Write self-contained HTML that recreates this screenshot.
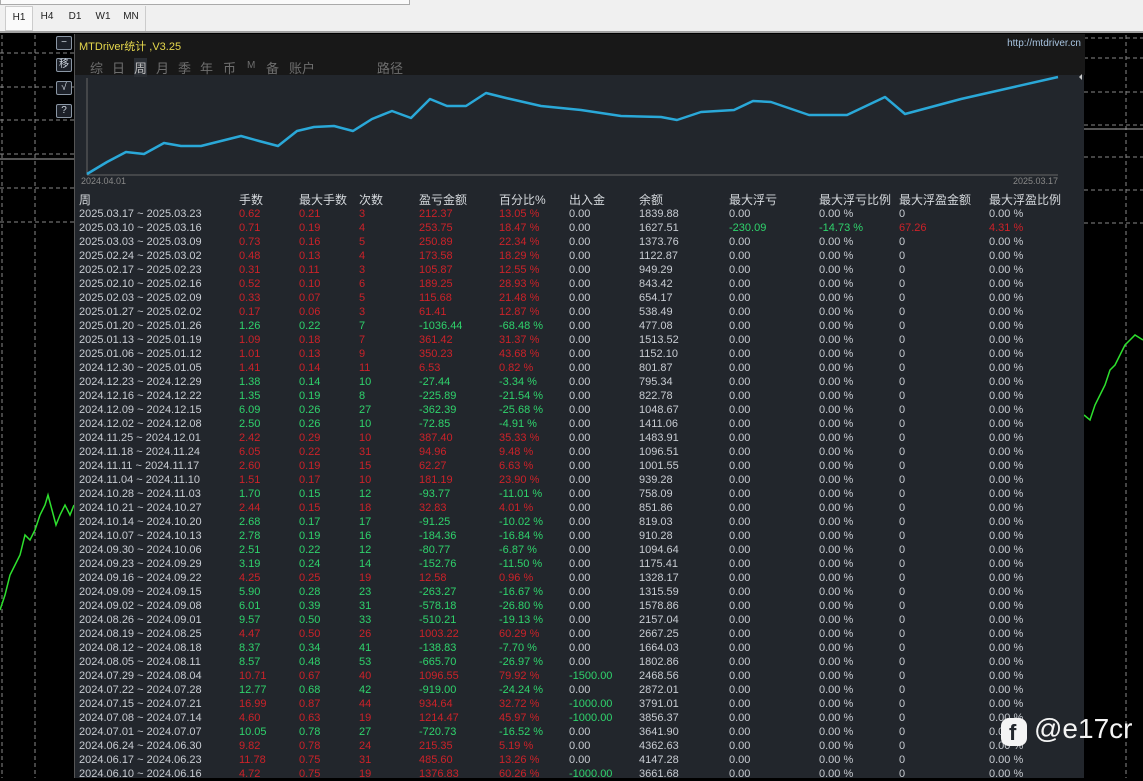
<!DOCTYPE html>
<html><head><meta charset="utf-8"><style>
*{margin:0;padding:0;box-sizing:border-box}
body{width:1143px;height:778px;overflow:hidden;background:#000;font-family:"Liberation Sans","Noto Sans CJK SC",sans-serif;position:relative}
#top{position:absolute;left:0;top:0;width:1143px;height:33px;background:#f0f0f0;border-bottom:2px solid #a0a0a0}
#top .bar{position:absolute;left:0;top:0;width:410px;height:5px;border:1px solid #aaa;border-top:none;background:#fafafa}
#top .tf{position:absolute;left:5px;top:6px;height:25px;display:flex;border-right:1px solid #ccc}
#top .tf span{font-size:10px;color:#222;width:28px;text-align:center;line-height:22px}
#top .tf span:first-child{border:1px solid #ccc;background:#fafafa}
#panel{position:absolute;left:74px;top:34px;width:1010px;height:744px;background:#22262c;border-left:1px solid #555}
#hdr{position:absolute;left:0;top:0;width:1010px;height:41px;background:#181818}
.title{position:absolute;left:4px;top:4px;font-size:11px;color:#e6d84c}
.url{position:absolute;right:4px;top:4px;font-size:10px;color:#a8c4e0}
.tabs span{position:absolute;top:24px;font-size:13px;color:#6e6e6e;white-space:nowrap}
.tabs .on{color:#bbb;background:#2a2e34}
.btn{position:absolute;left:56px;width:16px;height:14px;border:1px solid #8a96a4;border-radius:2px;background:#1c2028;color:#cfd6df;font-size:10px;text-align:center;line-height:12px}
table{position:absolute;left:79px;top:192px;border-collapse:collapse;table-layout:fixed;font-size:11px;color:#c8ccd2}
td{height:14px;line-height:14px;padding:0;white-space:nowrap;overflow:hidden}
tr.h td{font-size:12px;color:#d4d8dc;height:15px}
.R{color:#cc2229}.G{color:#2fd36c}
</style></head><body>
<div id="top"><div class="bar"></div><div class="tf"><span>H1</span><span>H4</span><span>D1</span><span>W1</span><span>MN</span></div></div>
<svg style="position:absolute;left:0;top:35px" width="1143" height="743">
<g stroke="#888" stroke-dasharray="4,3" stroke-width="1">
<line x1="2" y1="0" x2="2" y2="743"/><line x1="35" y1="0" x2="35" y2="743"/>
<line x1="0" y1="18" x2="74" y2="18"/><line x1="0" y1="52" x2="74" y2="52"/><line x1="0" y1="85" x2="74" y2="85"/><line x1="0" y1="119" x2="74" y2="119"/><line x1="0" y1="153" x2="74" y2="153"/><line x1="0" y1="187" x2="74" y2="187"/>
<line x1="1126" y1="0" x2="1126" y2="743"/>
<line x1="1084" y1="3" x2="1143" y2="3"/><line x1="1084" y1="23" x2="1143" y2="23"/><line x1="1084" y1="57" x2="1143" y2="57"/><line x1="1084" y1="90" x2="1143" y2="90"/><line x1="1084" y1="122" x2="1143" y2="122"/><line x1="1084" y1="155" x2="1143" y2="155"/><line x1="1084" y1="188" x2="1143" y2="188"/>
</g>
<line x1="0" y1="124" x2="74" y2="124" stroke="#aaa"/><line x1="1084" y1="94" x2="1143" y2="94" stroke="#aaa"/>
<polyline fill="none" stroke="#2ee02e" stroke-width="1.5" points="0,575 5,560 10,540 15,530 20,520 25,500 30,505 35,495 40,480 45,470 48,460 52,475 56,490 60,480 65,470 70,480 74,470"/>
<polyline fill="none" stroke="#2ee02e" stroke-width="1.5" points="1084,380 1090,385 1095,370 1100,360 1105,350 1110,335 1115,330 1120,320 1125,310 1130,305 1135,300 1143,305"/>
</svg>
<div class="btn" style="top:36px">−</div><div class="btn" style="top:58px">移</div><div class="btn" style="top:81px">√</div><div class="btn" style="top:104px">?</div>
<div id="panel">
<div id="hdr"><div class="title">MTDriver统计 ,V3.25</div><div class="url">http://mtdriver.cn</div>
<div class="tabs"><span style="left:15px">综</span><span style="left:37px">日</span><span class="on" style="left:59px">周</span><span style="left:81px">月</span><span style="left:103px">季</span><span style="left:125px">年</span><span style="left:148px">币</span><span style="left:172px;font-size:10px;top:26px">M</span><span style="left:191px">备</span><span style="left:214px">账户</span><span style="left:302px">路径</span></div></div>
<svg style="position:absolute;left:0;top:0" width="1010" height="160">
<line x1="12" y1="44" x2="12" y2="141" stroke="#666"/><line x1="12" y1="141" x2="983" y2="141" stroke="#666"/>
<polyline fill="none" stroke="#2aa8d8" stroke-width="2.5" stroke-linejoin="round" points="12,140 32,128 51,118 69,120 89,109 106,112 126,112 146,107 166,102 184,107 203,112 222,97 239,93 259,92 278,97 297,85 317,77 336,84 355,65 372,72 391,72 411,59 431,64 466,72 506,76 546,82 586,83 602,86 626,78 659,76 678,67 696,68 734,81 772,81 810,63 830,80 886,65 983,43"/>
<path d="M1007,40 l-3,3 3,3z" fill="#ccc"/>
<text x="6" y="150" font-size="9" fill="#888" font-family="Liberation Sans">2024.04.01</text>
<text x="938" y="150" font-size="9" fill="#888" font-family="Liberation Sans">2025.03.17</text>
</svg>
</div>
<table>
<colgroup><col style="width:160px"><col style="width:60px"><col style="width:60px"><col style="width:60px"><col style="width:80px"><col style="width:70px"><col style="width:70px"><col style="width:90px"><col style="width:90px"><col style="width:80px"><col style="width:90px"><col style="width:90px"></colgroup>
<tr class="h"><td>周</td><td>手数</td><td>最大手数</td><td>次数</td><td>盈亏金额</td><td>百分比%</td><td>出入金</td><td>余额</td><td>最大浮亏</td><td>最大浮亏比例</td><td>最大浮盈金额</td><td>最大浮盈比例</td></tr>
<tr><td>2025.03.17 ~ 2025.03.23</td><td class="R">0.62</td><td class="R">0.21</td><td class="R">3</td><td class="R">212.37</td><td class="R">13.05 %</td><td>0.00</td><td>1839.88</td><td>0.00</td><td>0.00 %</td><td>0</td><td>0.00 %</td></tr>
<tr><td>2025.03.10 ~ 2025.03.16</td><td class="R">0.71</td><td class="R">0.19</td><td class="R">4</td><td class="R">253.75</td><td class="R">18.47 %</td><td>0.00</td><td>1627.51</td><td class="G">-230.09</td><td class="G">-14.73 %</td><td class="R">67.26</td><td class="R">4.31 %</td></tr>
<tr><td>2025.03.03 ~ 2025.03.09</td><td class="R">0.73</td><td class="R">0.16</td><td class="R">5</td><td class="R">250.89</td><td class="R">22.34 %</td><td>0.00</td><td>1373.76</td><td>0.00</td><td>0.00 %</td><td>0</td><td>0.00 %</td></tr>
<tr><td>2025.02.24 ~ 2025.03.02</td><td class="R">0.48</td><td class="R">0.13</td><td class="R">4</td><td class="R">173.58</td><td class="R">18.29 %</td><td>0.00</td><td>1122.87</td><td>0.00</td><td>0.00 %</td><td>0</td><td>0.00 %</td></tr>
<tr><td>2025.02.17 ~ 2025.02.23</td><td class="R">0.31</td><td class="R">0.11</td><td class="R">3</td><td class="R">105.87</td><td class="R">12.55 %</td><td>0.00</td><td>949.29</td><td>0.00</td><td>0.00 %</td><td>0</td><td>0.00 %</td></tr>
<tr><td>2025.02.10 ~ 2025.02.16</td><td class="R">0.52</td><td class="R">0.10</td><td class="R">6</td><td class="R">189.25</td><td class="R">28.93 %</td><td>0.00</td><td>843.42</td><td>0.00</td><td>0.00 %</td><td>0</td><td>0.00 %</td></tr>
<tr><td>2025.02.03 ~ 2025.02.09</td><td class="R">0.33</td><td class="R">0.07</td><td class="R">5</td><td class="R">115.68</td><td class="R">21.48 %</td><td>0.00</td><td>654.17</td><td>0.00</td><td>0.00 %</td><td>0</td><td>0.00 %</td></tr>
<tr><td>2025.01.27 ~ 2025.02.02</td><td class="R">0.17</td><td class="R">0.06</td><td class="R">3</td><td class="R">61.41</td><td class="R">12.87 %</td><td>0.00</td><td>538.49</td><td>0.00</td><td>0.00 %</td><td>0</td><td>0.00 %</td></tr>
<tr><td>2025.01.20 ~ 2025.01.26</td><td class="G">1.26</td><td class="G">0.22</td><td class="G">7</td><td class="G">-1036.44</td><td class="G">-68.48 %</td><td>0.00</td><td>477.08</td><td>0.00</td><td>0.00 %</td><td>0</td><td>0.00 %</td></tr>
<tr><td>2025.01.13 ~ 2025.01.19</td><td class="R">1.09</td><td class="R">0.18</td><td class="R">7</td><td class="R">361.42</td><td class="R">31.37 %</td><td>0.00</td><td>1513.52</td><td>0.00</td><td>0.00 %</td><td>0</td><td>0.00 %</td></tr>
<tr><td>2025.01.06 ~ 2025.01.12</td><td class="R">1.01</td><td class="R">0.13</td><td class="R">9</td><td class="R">350.23</td><td class="R">43.68 %</td><td>0.00</td><td>1152.10</td><td>0.00</td><td>0.00 %</td><td>0</td><td>0.00 %</td></tr>
<tr><td>2024.12.30 ~ 2025.01.05</td><td class="R">1.41</td><td class="R">0.14</td><td class="R">11</td><td class="R">6.53</td><td class="R">0.82 %</td><td>0.00</td><td>801.87</td><td>0.00</td><td>0.00 %</td><td>0</td><td>0.00 %</td></tr>
<tr><td>2024.12.23 ~ 2024.12.29</td><td class="G">1.38</td><td class="G">0.14</td><td class="G">10</td><td class="G">-27.44</td><td class="G">-3.34 %</td><td>0.00</td><td>795.34</td><td>0.00</td><td>0.00 %</td><td>0</td><td>0.00 %</td></tr>
<tr><td>2024.12.16 ~ 2024.12.22</td><td class="G">1.35</td><td class="G">0.19</td><td class="G">8</td><td class="G">-225.89</td><td class="G">-21.54 %</td><td>0.00</td><td>822.78</td><td>0.00</td><td>0.00 %</td><td>0</td><td>0.00 %</td></tr>
<tr><td>2024.12.09 ~ 2024.12.15</td><td class="G">6.09</td><td class="G">0.26</td><td class="G">27</td><td class="G">-362.39</td><td class="G">-25.68 %</td><td>0.00</td><td>1048.67</td><td>0.00</td><td>0.00 %</td><td>0</td><td>0.00 %</td></tr>
<tr><td>2024.12.02 ~ 2024.12.08</td><td class="G">2.50</td><td class="G">0.26</td><td class="G">10</td><td class="G">-72.85</td><td class="G">-4.91 %</td><td>0.00</td><td>1411.06</td><td>0.00</td><td>0.00 %</td><td>0</td><td>0.00 %</td></tr>
<tr><td>2024.11.25 ~ 2024.12.01</td><td class="R">2.42</td><td class="R">0.29</td><td class="R">10</td><td class="R">387.40</td><td class="R">35.33 %</td><td>0.00</td><td>1483.91</td><td>0.00</td><td>0.00 %</td><td>0</td><td>0.00 %</td></tr>
<tr><td>2024.11.18 ~ 2024.11.24</td><td class="R">6.05</td><td class="R">0.22</td><td class="R">31</td><td class="R">94.96</td><td class="R">9.48 %</td><td>0.00</td><td>1096.51</td><td>0.00</td><td>0.00 %</td><td>0</td><td>0.00 %</td></tr>
<tr><td>2024.11.11 ~ 2024.11.17</td><td class="R">2.60</td><td class="R">0.19</td><td class="R">15</td><td class="R">62.27</td><td class="R">6.63 %</td><td>0.00</td><td>1001.55</td><td>0.00</td><td>0.00 %</td><td>0</td><td>0.00 %</td></tr>
<tr><td>2024.11.04 ~ 2024.11.10</td><td class="R">1.51</td><td class="R">0.17</td><td class="R">10</td><td class="R">181.19</td><td class="R">23.90 %</td><td>0.00</td><td>939.28</td><td>0.00</td><td>0.00 %</td><td>0</td><td>0.00 %</td></tr>
<tr><td>2024.10.28 ~ 2024.11.03</td><td class="G">1.70</td><td class="G">0.15</td><td class="G">12</td><td class="G">-93.77</td><td class="G">-11.01 %</td><td>0.00</td><td>758.09</td><td>0.00</td><td>0.00 %</td><td>0</td><td>0.00 %</td></tr>
<tr><td>2024.10.21 ~ 2024.10.27</td><td class="R">2.44</td><td class="R">0.15</td><td class="R">18</td><td class="R">32.83</td><td class="R">4.01 %</td><td>0.00</td><td>851.86</td><td>0.00</td><td>0.00 %</td><td>0</td><td>0.00 %</td></tr>
<tr><td>2024.10.14 ~ 2024.10.20</td><td class="G">2.68</td><td class="G">0.17</td><td class="G">17</td><td class="G">-91.25</td><td class="G">-10.02 %</td><td>0.00</td><td>819.03</td><td>0.00</td><td>0.00 %</td><td>0</td><td>0.00 %</td></tr>
<tr><td>2024.10.07 ~ 2024.10.13</td><td class="G">2.78</td><td class="G">0.19</td><td class="G">16</td><td class="G">-184.36</td><td class="G">-16.84 %</td><td>0.00</td><td>910.28</td><td>0.00</td><td>0.00 %</td><td>0</td><td>0.00 %</td></tr>
<tr><td>2024.09.30 ~ 2024.10.06</td><td class="G">2.51</td><td class="G">0.22</td><td class="G">12</td><td class="G">-80.77</td><td class="G">-6.87 %</td><td>0.00</td><td>1094.64</td><td>0.00</td><td>0.00 %</td><td>0</td><td>0.00 %</td></tr>
<tr><td>2024.09.23 ~ 2024.09.29</td><td class="G">3.19</td><td class="G">0.24</td><td class="G">14</td><td class="G">-152.76</td><td class="G">-11.50 %</td><td>0.00</td><td>1175.41</td><td>0.00</td><td>0.00 %</td><td>0</td><td>0.00 %</td></tr>
<tr><td>2024.09.16 ~ 2024.09.22</td><td class="R">4.25</td><td class="R">0.25</td><td class="R">19</td><td class="R">12.58</td><td class="R">0.96 %</td><td>0.00</td><td>1328.17</td><td>0.00</td><td>0.00 %</td><td>0</td><td>0.00 %</td></tr>
<tr><td>2024.09.09 ~ 2024.09.15</td><td class="G">5.90</td><td class="G">0.28</td><td class="G">23</td><td class="G">-263.27</td><td class="G">-16.67 %</td><td>0.00</td><td>1315.59</td><td>0.00</td><td>0.00 %</td><td>0</td><td>0.00 %</td></tr>
<tr><td>2024.09.02 ~ 2024.09.08</td><td class="G">6.01</td><td class="G">0.39</td><td class="G">31</td><td class="G">-578.18</td><td class="G">-26.80 %</td><td>0.00</td><td>1578.86</td><td>0.00</td><td>0.00 %</td><td>0</td><td>0.00 %</td></tr>
<tr><td>2024.08.26 ~ 2024.09.01</td><td class="G">9.57</td><td class="G">0.50</td><td class="G">33</td><td class="G">-510.21</td><td class="G">-19.13 %</td><td>0.00</td><td>2157.04</td><td>0.00</td><td>0.00 %</td><td>0</td><td>0.00 %</td></tr>
<tr><td>2024.08.19 ~ 2024.08.25</td><td class="R">4.47</td><td class="R">0.50</td><td class="R">26</td><td class="R">1003.22</td><td class="R">60.29 %</td><td>0.00</td><td>2667.25</td><td>0.00</td><td>0.00 %</td><td>0</td><td>0.00 %</td></tr>
<tr><td>2024.08.12 ~ 2024.08.18</td><td class="G">8.37</td><td class="G">0.34</td><td class="G">41</td><td class="G">-138.83</td><td class="G">-7.70 %</td><td>0.00</td><td>1664.03</td><td>0.00</td><td>0.00 %</td><td>0</td><td>0.00 %</td></tr>
<tr><td>2024.08.05 ~ 2024.08.11</td><td class="G">8.57</td><td class="G">0.48</td><td class="G">53</td><td class="G">-665.70</td><td class="G">-26.97 %</td><td>0.00</td><td>1802.86</td><td>0.00</td><td>0.00 %</td><td>0</td><td>0.00 %</td></tr>
<tr><td>2024.07.29 ~ 2024.08.04</td><td class="R">10.71</td><td class="R">0.67</td><td class="R">40</td><td class="R">1096.55</td><td class="R">79.92 %</td><td class="G">-1500.00</td><td>2468.56</td><td>0.00</td><td>0.00 %</td><td>0</td><td>0.00 %</td></tr>
<tr><td>2024.07.22 ~ 2024.07.28</td><td class="G">12.77</td><td class="G">0.68</td><td class="G">42</td><td class="G">-919.00</td><td class="G">-24.24 %</td><td>0.00</td><td>2872.01</td><td>0.00</td><td>0.00 %</td><td>0</td><td>0.00 %</td></tr>
<tr><td>2024.07.15 ~ 2024.07.21</td><td class="R">16.99</td><td class="R">0.87</td><td class="R">44</td><td class="R">934.64</td><td class="R">32.72 %</td><td class="G">-1000.00</td><td>3791.01</td><td>0.00</td><td>0.00 %</td><td>0</td><td>0.00 %</td></tr>
<tr><td>2024.07.08 ~ 2024.07.14</td><td class="R">4.60</td><td class="R">0.63</td><td class="R">19</td><td class="R">1214.47</td><td class="R">45.97 %</td><td class="G">-1000.00</td><td>3856.37</td><td>0.00</td><td>0.00 %</td><td>0</td><td>0.00 %</td></tr>
<tr><td>2024.07.01 ~ 2024.07.07</td><td class="G">10.05</td><td class="G">0.78</td><td class="G">27</td><td class="G">-720.73</td><td class="G">-16.52 %</td><td>0.00</td><td>3641.90</td><td>0.00</td><td>0.00 %</td><td>0</td><td>0.00 %</td></tr>
<tr><td>2024.06.24 ~ 2024.06.30</td><td class="R">9.82</td><td class="R">0.78</td><td class="R">24</td><td class="R">215.35</td><td class="R">5.19 %</td><td>0.00</td><td>4362.63</td><td>0.00</td><td>0.00 %</td><td>0</td><td>0.00 %</td></tr>
<tr><td>2024.06.17 ~ 2024.06.23</td><td class="R">11.78</td><td class="R">0.75</td><td class="R">31</td><td class="R">485.60</td><td class="R">13.26 %</td><td>0.00</td><td>4147.28</td><td>0.00</td><td>0.00 %</td><td>0</td><td>0.00 %</td></tr>
<tr><td>2024.06.10 ~ 2024.06.16</td><td class="R">4.72</td><td class="R">0.75</td><td class="R">19</td><td class="R">1376.83</td><td class="R">60.26 %</td><td class="G">-1000.00</td><td>3661.68</td><td>0.00</td><td>0.00 %</td><td>0</td><td>0.00 %</td></tr>
</table>
<div style="position:absolute;left:1001px;top:718px;width:26px;height:28px;background:#f4f4f4;border-radius:8px"><div style="position:absolute;left:8px;top:2px;font-size:22px;font-weight:bold;color:#22262c;font-family:'Liberation Sans',sans-serif">f</div></div>
<div style="position:absolute;left:1034px;top:713px;font-size:28px;color:#f4f4f4">@e17cr</div>
</body></html>
